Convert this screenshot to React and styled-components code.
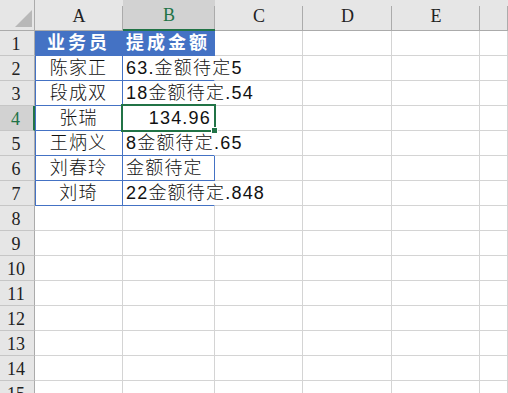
import React from 'react';
import styled, { createGlobalStyle, css } from 'styled-components';

const GlobalStyle = createGlobalStyle`
  html, body { margin: 0; padding: 0; background: #fff; overflow: hidden; }
  body { width: 508px; height: 393px; }
`;

const BLUE = '#4472c4';
const GREEN = '#217346';
const GRID = '#d4d4d4';
const HEAD_LINE = '#ababab';

const COLS = ['A', 'B', 'C', 'D', 'E', ''];
const WIDTHS = '35px 88px 92px 88px 89px 88px 1fr';

const rows = [
  { a: '业务员', b: '提成金额', head: true },
  { a: '陈家正', b: '63.金额待定5', spill: true },
  { a: '段成双', b: '18金额待定.54', spill: true },
  { a: '张瑞', b: '134.96', selected: true },
  { a: '王炳义', b: '8金额待定.65', spill: true },
  { a: '刘春玲', b: '金额待定' },
  { a: '刘琦', b: '22金额待定.848', spill: true },
];

const Sheet = styled.div`
  display: grid;
  grid-template-columns: ${WIDTHS};
  grid-template-rows: 31px;
  grid-auto-rows: 25px;
  width: 508px;
  height: 393px;
  overflow: hidden;
`;

const Corner = styled.div`
  position: relative;
  background: #e6e6e6;
  border-right: 1px solid ${HEAD_LINE};
  border-bottom: 1px solid ${HEAD_LINE};
  box-sizing: border-box;
  &::after {
    content: '';
    position: absolute;
    right: 2px;
    bottom: 3px;
    width: 0;
    height: 0;
    border-left: 17px solid transparent;
    border-bottom: 17px solid #b8b8b8;
  }
`;

const ColHead = styled.div`
  position: relative;
  display: flex;
  align-items: flex-end;
  justify-content: center;
  padding-bottom: 3px;
  box-sizing: border-box;
  background: ${p => (p.$active ? '#d2d2d2' : '#e6e6e6')};
  border-bottom: ${p => (p.$active ? `2px solid ${GREEN}` : `1px solid ${HEAD_LINE}`)};
  color: ${p => (p.$active ? GREEN : '#222')};
  font: 18px "Liberation Serif", serif;
  &::after {
    content: '';
    position: absolute;
    right: 0;
    top: 6px;
    bottom: 0;
    width: 1px;
    background: ${HEAD_LINE};
  }
`;

const RowHead = styled.div`
  display: flex;
  align-items: center;
  justify-content: center;
  box-sizing: border-box;
  background: ${p => (p.$active ? '#d2d2d2' : '#e6e6e6')};
  border-right: ${p => (p.$active ? `2px solid ${GREEN}` : `1px solid ${HEAD_LINE}`)};
  border-bottom: 1px solid #c6c6c6;
  color: ${p => (p.$active ? GREEN : '#222')};
  font: 18px "Liberation Serif", serif;
  padding: 2px 2px 0 0;
`;

const Cell = styled.div`
  position: relative;
  display: flex;
  align-items: flex-end;
  box-sizing: border-box;
  padding: 0 3px 1px;
  white-space: nowrap;
  border-right: 1px solid ${GRID};
  border-bottom: 1px solid ${GRID};
  font: 18px "Liberation Sans", "Noto Sans CJK SC", sans-serif;
  font-weight: 300;
  letter-spacing: 1.2px;
  color: #111;
  justify-content: ${p => p.$align || 'flex-start'};
  ${p => p.$table && css`
    border-right-color: ${BLUE};
    border-bottom-color: ${BLUE};
  `}
  ${p => p.$edge && css`box-shadow: inset 1px 0 0 ${BLUE};`}
  ${p => p.$head && css`
    background: ${BLUE};
    color: #fff;
    font-weight: bold;
    letter-spacing: 3px;
  `}
  ${p => p.$spill && css`border-right-color: transparent;`}
`;

const Selection = styled.div`
  position: absolute;
  left: -2px;
  top: -2px;
  right: -2px;
  bottom: -2px;
  border: 2px solid ${GREEN};
  pointer-events: none;
  &::after {
    content: '';
    position: absolute;
    right: -4px;
    bottom: -4px;
    width: 5px;
    height: 5px;
    background: ${GREEN};
    border: 1px solid #fff;
  }
`;

const CellText = styled.span`
  position: relative;
  z-index: 1;
`;

export default function App() {
  const total = 15;
  const cells = [];
  cells.push(<Corner key="corner" />);
  COLS.forEach((c, i) => cells.push(<ColHead key={'h' + i} $active={c === 'B'}>{c}</ColHead>));

  for (let i = 0; i < total; i++) {
    const r = rows[i];
    const n = i + 1;
    cells.push(<RowHead key={'r' + n} $active={n === 4}>{n}</RowHead>);
    if (r) {
      cells.push(
        <Cell key={'a' + n} $table $edge $head={r.head} $align="center">{r.a}</Cell>
      );
      cells.push(
        <Cell
          key={'b' + n}
          $table
          $head={r.head}
          $spill={r.spill || r.selected}
          $align={r.selected ? 'flex-end' : 'flex-start'}
          style={{ zIndex: r.selected ? 2 : 1 }}
        >
          <CellText>{r.b}</CellText>
          {r.selected && <Selection />}
        </Cell>
      );
    } else {
      cells.push(<Cell key={'a' + n} />);
      cells.push(<Cell key={'b' + n} />);
    }
    cells.push(<Cell key={'c' + n} />);
    cells.push(<Cell key={'d' + n} />);
    cells.push(<Cell key={'e' + n} />);
    cells.push(<Cell key={'f' + n} />);
  }

  return (
    <>
      <GlobalStyle />
      <Sheet>{cells}</Sheet>
    </>
  );
}
